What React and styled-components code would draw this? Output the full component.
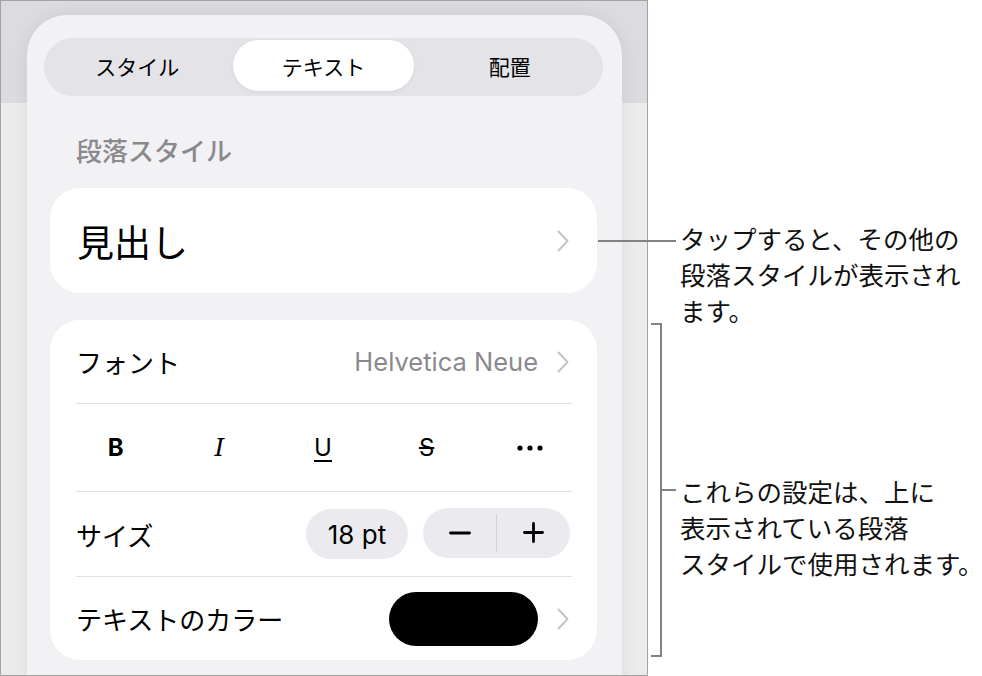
import React from 'react'
import styled, { createGlobalStyle } from 'styled-components'

const GlobalStyle = createGlobalStyle`
  html, body {
    margin: 0;
    padding: 0;
    background: #ffffff;
  }
  body {
    font-family: "Inter", "Noto Sans CJK JP", sans-serif;
    color: #000;
  }
`

const Page = styled.div`
  position: relative;
  display: flex;
  width: 982px;
  height: 676px;
  overflow: hidden;
`

const Device = styled.div`
  box-sizing: border-box;
  flex-shrink: 0;
  width: 648px;
  height: 676px;
  border: 1px solid #a3a3a3;
  background: linear-gradient(to bottom, #dcdce0 0, #dcdce0 102px, #ececed 102px);
  overflow: hidden;
`

const Sheet = styled.div`
  box-sizing: border-box;
  display: flex;
  flex-direction: column;
  margin: 14px 0 0 26px;
  width: 595px;
  height: 700px;
  padding: 23px 25px 0 23px;
  border-radius: 40px 40px 0 0;
  background: #f2f2f4;
  box-shadow: 0 0 18px rgba(0, 0, 0, 0.07);
`

const Segmented = styled.div`
  display: grid;
  grid-template-columns: repeat(3, 1fr);
  height: 58px;
  margin: 0 -6px;
  padding: 2px 0;
  box-sizing: border-box;
  border-radius: 29px;
  background: #e3e3e8;
`

const Segment = styled.div`
  display: flex;
  align-items: center;
  justify-content: center;
  margin: 0 3px 3px;
  border-radius: 27px;
  font-size: 21px;
  color: #000;
  background: ${(p) => (p.$active ? '#ffffff' : 'transparent')};
  box-shadow: ${(p) => (p.$active ? '0 1px 4px rgba(0,0,0,0.06)' : 'none')};
`

const SectionLabel = styled.div`
  margin: 38px 0 18px 26px;
  font-size: 26px;
  line-height: 36px;
  font-weight: 500;
  color: #8a8a8e;
`

const Card = styled.div`
  box-sizing: border-box;
  border-radius: 30px;
  background: #ffffff;
  margin-top: ${(p) => p.$gap || 0}px;
`

const HeadingCard = styled(Card)`
  display: flex;
  align-items: center;
  justify-content: space-between;
  height: 105px;
  padding: 0 28px 0 27px;
  font-size: 37px;
`

const ListCard = styled(Card)`
  display: flex;
  flex-direction: column;
  padding: 0 25px 0 26px;
`

const Row = styled.div`
  display: flex;
  align-items: center;
  justify-content: space-between;
  height: ${(p) => p.$h}px;
  padding-right: ${(p) => p.$pr || 0}px;
  font-size: 26px;
`

const Divider = styled.div`
  height: 1px;
  background: #e2e2e4;
`

const Trailing = styled.div`
  display: flex;
  align-items: center;
  gap: ${(p) => p.$gap || 0}px;
`

const Value = styled.span`
  font-size: 25.5px;
  color: #8a8a8e;
`

const FormatRow = styled.div`
  display: grid;
  grid-template-columns: repeat(5, 1fr);
  align-items: center;
  height: 87px;
  margin: 0 -10px 0 -12px;
`

const FormatButton = styled.div`
  display: flex;
  justify-content: center;
  align-items: center;
  font-size: ${(p) => p.$size || 24}px;
  line-height: 1;
  color: #000;
  font-weight: ${(p) => (p.$bold ? 700 : 400)};
  font-style: ${(p) => (p.$italic ? 'italic' : 'normal')};
  font-family: ${(p) => (p.$serif ? '"DejaVu Serif", serif' : 'inherit')};
  text-decoration: ${(p) => p.$decor || 'none'};
  text-underline-offset: 4px;
  text-decoration-thickness: 2px;
`

const Pill = styled.div`
  display: flex;
  align-items: center;
  justify-content: center;
  width: 102px;
  height: 50px;
  border-radius: 25px;
  background: #ebebef;
  font-size: 26px;
`

const Stepper = styled.div`
  display: flex;
  align-items: center;
  width: 147px;
  height: 50px;
  border-radius: 25px;
  background: #ebebef;
  margin-top: -3px;
`

const StepButton = styled.div`
  flex: 1;
  display: flex;
  align-items: center;
  justify-content: center;
  height: 100%;
`

const StepDivider = styled.div`
  width: 1px;
  height: 38px;
  background: #d4d4d7;
`

const Swatch = styled.div`
  width: 149px;
  height: 54px;
  border-radius: 27px;
  background: ${(p) => p.$color};
`

const Notes = styled.div`
  display: flex;
  flex-direction: column;
  padding-left: 32px;
`

const Note = styled.p`
  margin: ${(p) => p.$top}px 0 0;
  font-family: "Noto Sans CJK JP", sans-serif;
  font-size: 25.5px;
  line-height: 36px;
  color: #111;
  white-space: nowrap;
`

const Leader = styled.div`
  position: absolute;
  left: 598px;
  top: 240px;
  width: 78px;
  height: 2px;
  background: #828282;
`

const Bracket = styled.div`
  position: absolute;
  left: 651px;
  top: 323px;
  width: 11px;
  height: 334px;
  box-sizing: border-box;
  border: 2px solid #828282;
  border-left: none;
`

const BracketTick = styled.div`
  position: absolute;
  left: 662px;
  top: 489px;
  width: 14px;
  height: 2px;
  background: #828282;
`

const Chevron = () => (
  <svg width="12" height="22" viewBox="0 0 12 22">
    <polyline
      points="1.5,1.5 10.5,11 1.5,20.5"
      fill="none"
      stroke="#c4c4c7"
      strokeWidth="2"
      strokeLinecap="round"
      strokeLinejoin="round"
    />
  </svg>
)

const Dots = () => (
  <svg width="26" height="6" viewBox="0 0 26 6">
    <circle cx="3" cy="3" r="2.6" fill="#000" />
    <circle cx="13" cy="3" r="2.6" fill="#000" />
    <circle cx="23" cy="3" r="2.6" fill="#000" />
  </svg>
)

const Minus = () => (
  <svg width="22" height="4" viewBox="0 0 22 4">
    <line x1="1.5" y1="2" x2="20.5" y2="2" stroke="#000" strokeWidth="2.8" strokeLinecap="round" />
  </svg>
)

const Plus = () => (
  <svg width="21" height="21" viewBox="0 0 21 21">
    <line x1="1.5" y1="10.5" x2="19.5" y2="10.5" stroke="#000" strokeWidth="2.8" strokeLinecap="round" />
    <line x1="10.5" y1="1.5" x2="10.5" y2="19.5" stroke="#000" strokeWidth="2.8" strokeLinecap="round" />
  </svg>
)

const tabs = ['スタイル', 'テキスト', '配置']

export default function App() {
  return (
    <>
      <GlobalStyle />
      <Page>
        <Device>
          <Sheet>
            <Segmented>
              {tabs.map((t) => (
                <Segment key={t} $active={t === 'テキスト'}>
                  {t}
                </Segment>
              ))}
            </Segmented>

            <SectionLabel>段落スタイル</SectionLabel>

            <HeadingCard>
              <span>見出し</span>
              <Chevron />
            </HeadingCard>

            <ListCard $gap={27}>
              <Row $h={83} $pr={3}>
                <span>フォント</span>
                <Trailing $gap={19}>
                  <Value>Helvetica Neue</Value>
                  <Chevron />
                </Trailing>
              </Row>
              <Divider />
              <FormatRow>
                <FormatButton $bold>B</FormatButton>
                <FormatButton $italic $serif $size={25}>I</FormatButton>
                <FormatButton $decor="underline">U</FormatButton>
                <FormatButton $decor="line-through">S</FormatButton>
                <FormatButton>
                  <Dots />
                </FormatButton>
              </FormatRow>
              <Divider />
              <Row $h={84} $pr={2}>
                <span>サイズ</span>
                <Trailing $gap={15}>
                  <Pill>18 pt</Pill>
                  <Stepper>
                    <StepButton>
                      <Minus />
                    </StepButton>
                    <StepDivider />
                    <StepButton>
                      <Plus />
                    </StepButton>
                  </Stepper>
                </Trailing>
              </Row>
              <Divider />
              <Row $h={83} $pr={3}>
                <span>テキストのカラー</span>
                <Trailing $gap={19}>
                  <Swatch $color="#000000" />
                  <Chevron />
                </Trailing>
              </Row>
            </ListCard>
          </Sheet>
        </Device>

        <Notes>
          <Note $top={220}>
            タップすると、その他の
            <br />
            段落スタイルが表示され
            <br />
            ます。
          </Note>
          <Note $top={145}>
            これらの設定は、上に
            <br />
            表示されている段落
            <br />
            スタイルで使用されます。
          </Note>
        </Notes>

        <Leader />
        <Bracket />
        <BracketTick />
      </Page>
    </>
  )
}
